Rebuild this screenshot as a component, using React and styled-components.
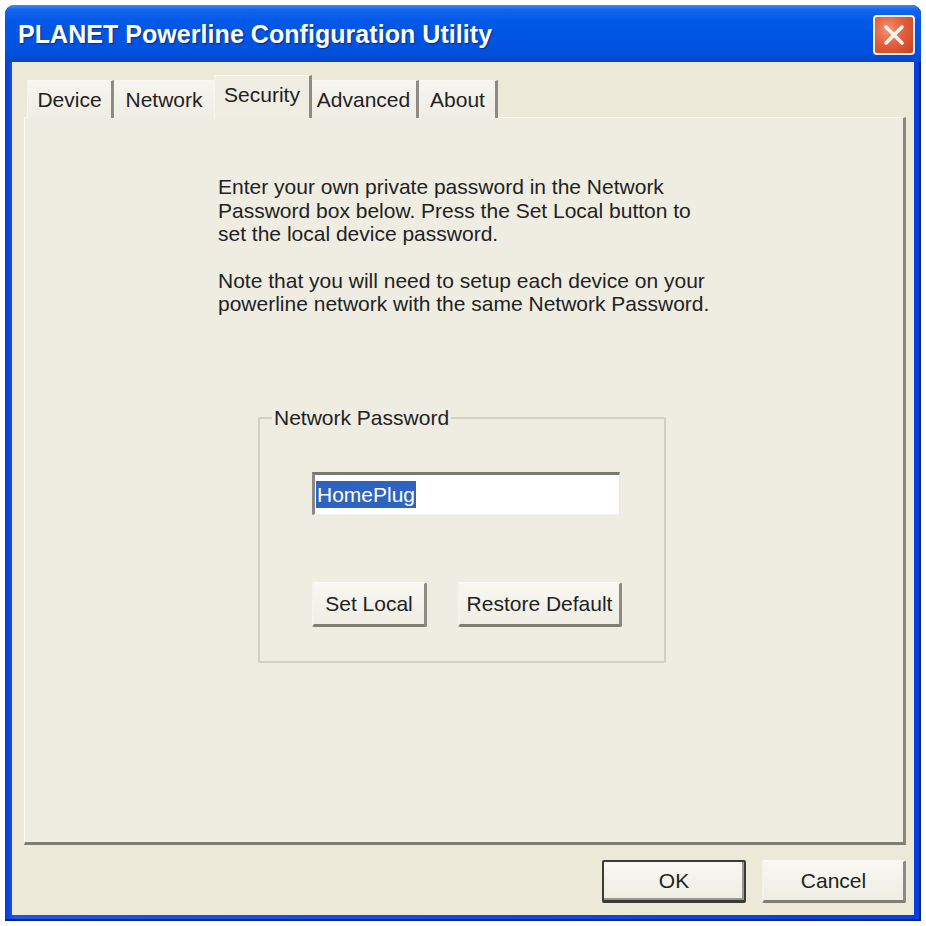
import React from "react";
import styled, { createGlobalStyle } from "styled-components";

const GlobalStyle = createGlobalStyle`
  html, body {
    margin: 0;
    padding: 0;
    background: #ffffff;
  }
  body {
    font-family: "Liberation Sans", Arial, sans-serif;
  }
`;

const Window = styled.div`
  margin: 5px 0 0 5px;
  width: 916px;
  height: 916px;
  box-sizing: border-box;
  display: flex;
  flex-direction: column;
  padding: 0 7px 6px 7px;
  background: linear-gradient(90deg, #0a3bd0 0%, #1a55e6 1%, #0a3ed8 100%);
  border-radius: 9px 9px 0 0;
  box-shadow: inset 0 -2px 0 #06228f, inset -2px 0 0 #06228f;
`;

const TitleBar = styled.div`
  margin: 0 -7px;
  height: 57px;
  flex: none;
  display: flex;
  align-items: center;
  justify-content: space-between;
  padding: 0 6px 0 13px;
  border-radius: 9px 9px 0 0;
  background: linear-gradient(
    180deg,
    #3d8cf5 0%,
    #1464ef 8%,
    #0058e6 30%,
    #0054e3 60%,
    #0050dd 85%,
    #0a44c8 100%
  );
`;

const Title = styled.div`
  color: #ffffff;
  font-weight: bold;
  font-size: 25px;
  letter-spacing: 0.05px;
  text-shadow: 1px 1px 1px #0a2c8a;
  margin-top: 2px;
`;

const CloseButton = styled.div`
  width: 38px;
  height: 36px;
  margin-top: 3px;
  display: flex;
  align-items: center;
  justify-content: center;
  border: 2px solid #f3f0ff;
  border-radius: 4px;
  background: radial-gradient(
    circle at 35% 35%,
    #f19577 0%,
    #e2603d 45%,
    #c8401d 100%
  );
`;

const Body = styled.div`
  flex: 1;
  display: flex;
  flex-direction: column;
  background: #ece9d8;
  padding: 14px 8px 12px 12px;
`;

const TabRow = styled.div`
  display: flex;
  align-items: flex-end;
  height: 42px;
  padding-left: 3px;
  margin-bottom: -1px;
  position: relative;
  z-index: 1;
`;

const Tab = styled.div`
  width: ${(p) => p.$w}px;
  height: ${(p) => (p.$active ? 43 : 38)}px;
  box-sizing: border-box;
  display: flex;
  align-items: ${(p) => (p.$active ? "flex-start" : "center")};
  justify-content: center;
  padding-top: ${(p) => (p.$active ? 7 : 0)}px;
  font-size: 21px;
  color: #222222;
  background: ${(p) =>
    p.$active
      ? "#f0eee3"
      : "linear-gradient(180deg, #f6f5ef 0%, #efede3 100%)"};
  border-top: 1px solid ${(p) => (p.$active ? "#fbfaf5" : "#f9f8f2")};
  border-left: 1px solid #f6f5ee;
  border-right: 3px solid ${(p) => (p.$hideEdge ? "transparent" : "#8e8c82")};
  margin: 0 ${(p) => (p.$active ? -2 : 0)}px;
  position: relative;
  z-index: ${(p) => (p.$active ? 2 : 1)};
`;

const Panel = styled.div`
  flex: 1;
  display: flex;
  flex-direction: column;
  align-items: flex-start;
  background: #efede2;
  border-top: 1px solid #fbfaf4;
  border-left: 1px solid #fbfaf4;
  border-right: 3px solid #8a897f;
  border-bottom: 3px solid #7e7d74;
  padding: 57px 0 0 193px;
`;

const Para = styled.p`
  margin: 0 0 23px 0;
  font-size: 21px;
  line-height: 23.5px;
  color: #222222;
  white-space: nowrap;
`;

const GroupBox = styled.fieldset`
  margin: 67px 0 0 40px;
  width: 408px;
  box-sizing: border-box;
  border: 2px solid #d2d0c4;
  border-radius: 2px;
  padding: 42px 0 34px 52px;
`;

const Legend = styled.legend`
  font-size: 21px;
  line-height: 24px;
  color: #222222;
  padding: 0 2px;
  margin-left: -40px;
`;

const PasswordField = styled.div`
  width: 308px;
  height: 43px;
  box-sizing: border-box;
  background: #ffffff;
  border-top: 3px solid #7a7970;
  border-left: 3px solid #8a8980;
  border-right: 1px solid #e8e6dc;
  border-bottom: 1px solid #f2f1ea;
  display: flex;
  align-items: center;
  padding-left: 1px;
`;

const Selected = styled.span`
  background: #2f63c0;
  color: #ffffff;
  font-size: 21px;
  line-height: 27px;
  padding: 0 1px;
`;

const ButtonRow = styled.div`
  display: flex;
  gap: 31px;
  margin-top: 67px;
`;

const Button = styled.div`
  width: ${(p) => p.$w}px;
  height: ${(p) => p.$h || 45}px;
  box-sizing: border-box;
  display: flex;
  align-items: center;
  justify-content: center;
  font-size: 21px;
  color: #222222;
  background: linear-gradient(180deg, #f8f7f2 0%, #efede3 100%);
  border-top: 2px solid #fbfaf6;
  border-left: 2px solid #f4f3ec;
  border-right: 3px solid #8d8b82;
  border-bottom: 3px solid #7f7d74;
  border-radius: 2px;
  ${(p) =>
    p.$default &&
    `
    border: 2px solid #3a3a36;
    border-bottom-width: 3px;
    box-shadow: inset -2px -2px 0 #9a988e;
  `}
`;

const Footer = styled.div`
  display: flex;
  justify-content: flex-end;
  gap: 16px;
  padding-top: 15px;
`;

const tabs = [
  { label: "Device", w: 87 },
  { label: "Network", w: 102, hideEdge: true },
  { label: "Security", w: 98, active: true },
  { label: "Advanced", w: 109 },
  { label: "About", w: 79 },
];

const App = () => {
  return (
    <>
      <GlobalStyle />
      <Window>
        <TitleBar>
          <Title>PLANET Powerline Configuration Utility</Title>
          <CloseButton>
            <svg width="24" height="24" viewBox="0 0 24 24">
              <path
                d="M4 4 L20 20 M20 4 L4 20"
                stroke="#fff4ee"
                strokeWidth="3.6"
                strokeLinecap="round"
              />
            </svg>
          </CloseButton>
        </TitleBar>
        <Body>
          <TabRow>
            {tabs.map((t) => (
              <Tab
                key={t.label}
                $w={t.w}
                $active={t.active}
                $hideEdge={t.hideEdge}
              >
                {t.label}
              </Tab>
            ))}
          </TabRow>
          <Panel>
            <Para>
              Enter your own private password in the Network
              <br />
              Password box below. Press the Set Local button to
              <br />
              set the local device password.
            </Para>
            <Para>
              Note that you will need to setup each device on your
              <br />
              powerline network with the same Network Password.
            </Para>
            <GroupBox>
              <Legend>Network Password</Legend>
              <PasswordField>
                <Selected>HomePlug</Selected>
              </PasswordField>
              <ButtonRow>
                <Button $w={115}>Set Local</Button>
                <Button $w={164}>Restore Default</Button>
              </ButtonRow>
            </GroupBox>
          </Panel>
          <Footer>
            <Button $w={144} $h={43} $default>
              OK
            </Button>
            <Button $w={144} $h={43}>
              Cancel
            </Button>
          </Footer>
        </Body>
      </Window>
    </>
  );
};

export default App;
